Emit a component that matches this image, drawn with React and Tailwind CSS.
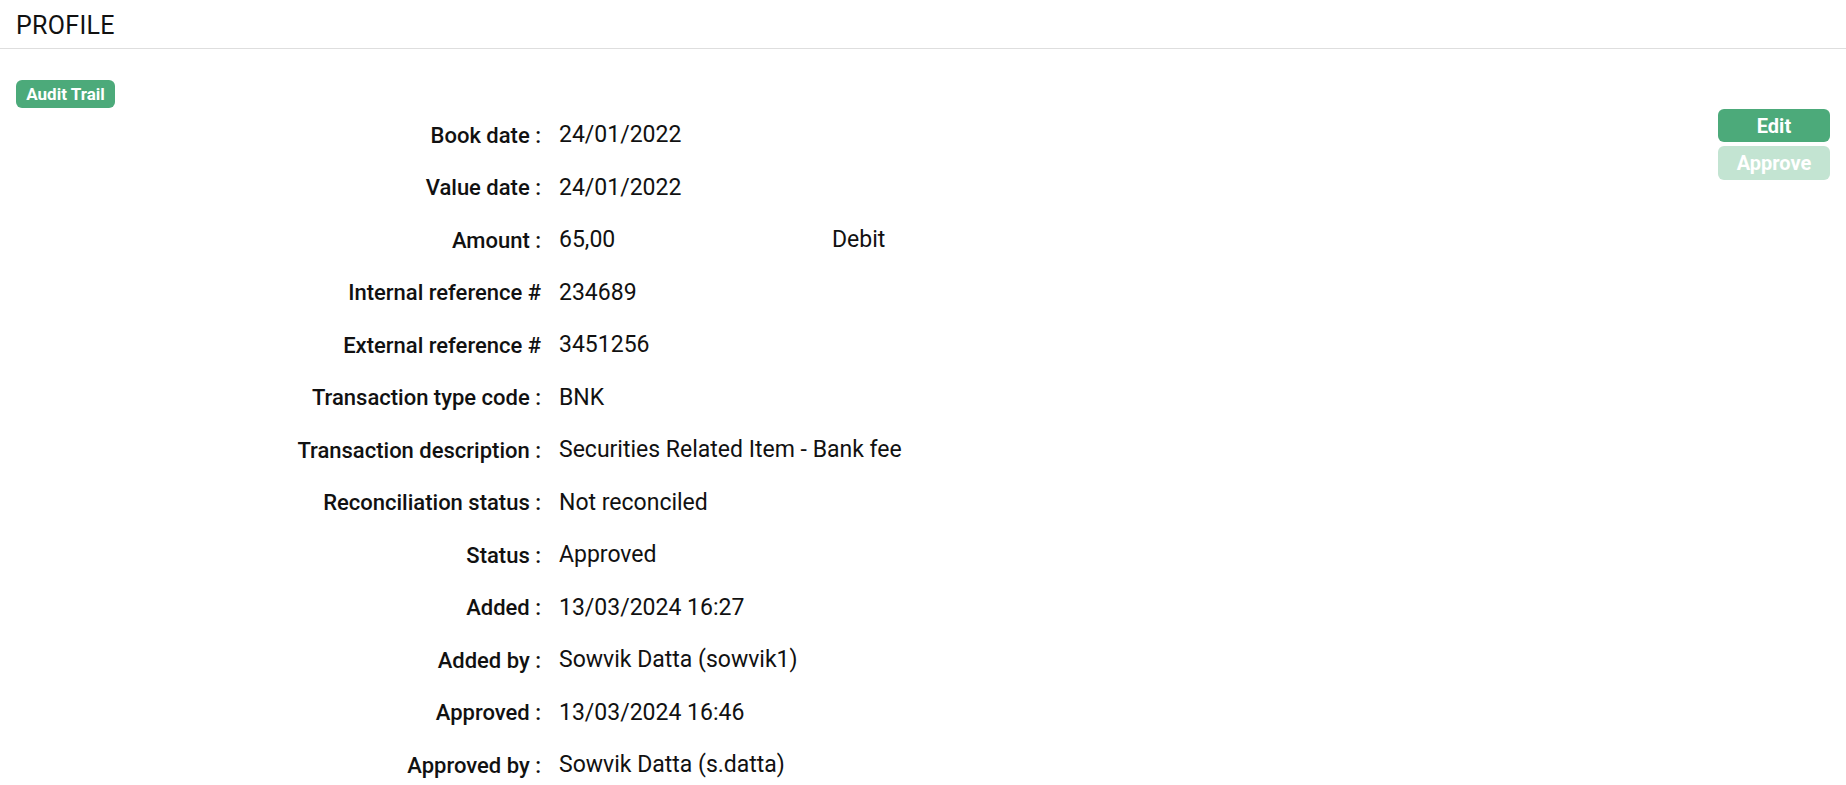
import React from "react";

const rows = [
  ["Book date :", "24/01/2022"],
  ["Value date :", "24/01/2022"],
  ["Amount :", "65,00", "Debit"],
  ["Internal reference #", "234689"],
  ["External reference #", "3451256"],
  ["Transaction type code :", "BNK"],
  ["Transaction description :", "Securities Related Item - Bank fee"],
  ["Reconciliation status :", "Not reconciled"],
  ["Status :", "Approved"],
  ["Added :", "13/03/2024 16:27"],
  ["Added by :", "Sowvik Datta (sowvik1)"],
  ["Approved :", "13/03/2024 16:46"],
  ["Approved by :", "Sowvik Datta (s.datta)"],
];

const App = () => {
  return (
    <div className="min-h-screen bg-white text-[#111] font-['Roboto',sans-serif]">
      {/* header */}
      <div className="h-[49px] flex items-end pb-[10px] px-4 border-b border-[#dedede]">
        <h1 className="text-[25px] leading-none font-normal tracking-[0.3px]">PROFILE</h1>
      </div>

      <div className="px-4 pt-[31px]">
        <button className="h-[28px] w-[99px] rounded-[6px] bg-[#4caa7a] text-white text-[17px] font-bold leading-none">
          Audit Trail
        </button>

        <div className="flex mt-[1px]">
          {/* details */}
          <div className="flex-1 flex flex-col">
            {rows.map(([label, value, extra]) => (
              <div key={label} className="h-[52.5px] flex items-center whitespace-nowrap">
                <div className="w-[525px] text-right font-medium text-[22px]">{label}</div>
                <div className={extra ? "pl-[18px] w-[291px] text-[23px]" : "pl-[18px] text-[23px]"}>{value}</div>
                {extra && <div className="text-[23px]">{extra}</div>}
              </div>
            ))}
          </div>

          {/* actions */}
          <div className="w-[112px] flex flex-col gap-[4px]">
            <button className="h-[33px] rounded-[6px] bg-[#4caa7a] text-white text-[20px] font-bold">
              Edit
            </button>
            <button className="h-[34px] rounded-[6px] bg-[#c3e4d2] text-white text-[20px] font-bold">
              Approve
            </button>
          </div>
        </div>
      </div>
    </div>
  );
};

export default App;
